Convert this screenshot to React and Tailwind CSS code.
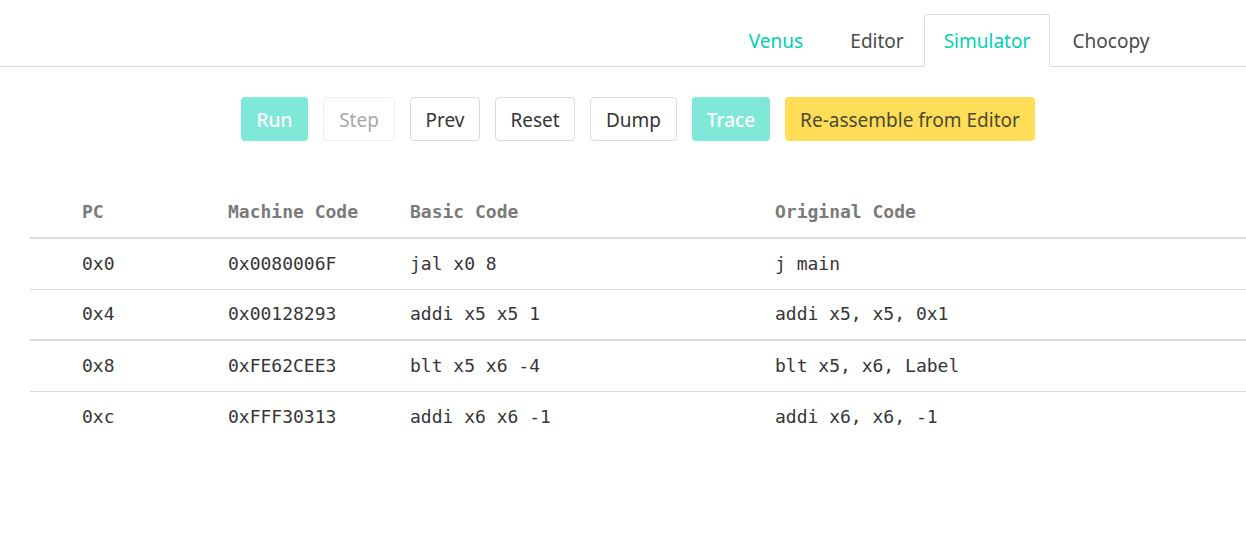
import React from 'react';

const tabs = [
  { name: 'Venus', width: 'w-[94px]', cls: 'text-[#00d1b2]', ml: 'ml-0' },
  { name: 'Editor', width: 'w-[94px]', cls: 'text-[#4a4a4a]', ml: 'ml-[7px]' },
  { name: 'Simulator', width: 'w-[126px]', cls: 'text-[#00d1b2]', active: true, ml: 'ml-0' },
  { name: 'Chocopy', width: 'w-[122px]', cls: 'text-[#4a4a4a]', ml: 'ml-0' },
];

const rows = [
  { pc: '0x0', mc: '0x0080006F', basic: 'jal x0 8', orig: 'j main', border: 'border-b border-[#dbdbdb]' },
  { pc: '0x4', mc: '0x00128293', basic: 'addi x5 x5 1', orig: 'addi x5, x5, 0x1', border: 'border-b-2 border-[#dbdbdb]' },
  { pc: '0x8', mc: '0xFE62CEE3', basic: 'blt x5 x6 -4', orig: 'blt x5, x6, Label', border: 'border-b border-[#dbdbdb]' },
  { pc: '0xc', mc: '0xFFF30313', basic: 'addi x6 x6 -1', orig: 'addi x6, x6, -1', border: '' },
];

const mono = { fontFamily: '"DejaVu Sans Mono", "Liberation Mono", monospace' };

export default function App() {
  return (
    <div className="w-[1246px] h-[548px] bg-white overflow-hidden text-[#4a4a4a]" style={{ fontFamily: '"Noto Sans", "Open Sans", sans-serif' }}>
      {/* tabs */}
      <div className="h-[67px] border-b border-[#dbdbdb] flex justify-end items-end pr-[74px]">
        {tabs.map(t => (
          <div
            key={t.name}
            className={`${t.width} ${t.ml} h-[53px] -mb-px pt-[2px] flex items-center justify-center text-[19px] rounded-t-[4px] border ${t.cls} ${t.active ? 'border-[#dbdbdb] border-b-white bg-white' : 'border-transparent'}`}
          >
            {t.name}
          </div>
        ))}
      </div>

      {/* buttons */}
      <div className="flex justify-center gap-[15px] mt-[30px] pl-[30px] text-[19px]">
        <button className="w-[67px] h-[44px] pt-[2px] rounded-[4px] bg-[#80e8d9] text-white font-medium">Run</button>
        <button className="w-[72px] h-[44px] pt-[2px] rounded-[4px] border border-[#ededed] text-[#a8a8a8]">Step</button>
        <button className="w-[70px] h-[44px] pt-[2px] rounded-[4px] border border-[#dbdbdb] text-[#363636]">Prev</button>
        <button className="w-[80px] h-[44px] pt-[2px] rounded-[4px] border border-[#dbdbdb] text-[#363636]">Reset</button>
        <button className="w-[87px] h-[44px] pt-[2px] rounded-[4px] border border-[#dbdbdb] text-[#363636]">Dump</button>
        <button className="w-[78px] h-[44px] pt-[2px] rounded-[4px] bg-[#80e8d9] text-white font-medium">Trace</button>
        <button className="w-[250px] h-[44px] pt-[2px] rounded-[4px] bg-[#ffdd57] text-[#4a4a35]">Re-assemble from Editor</button>
      </div>

      {/* table */}
      <div className="mt-[46px] ml-[30px] text-[18px]" style={mono}>
        <div className="flex items-center h-[52px] pb-[2px] border-b-2 border-[#dbdbdb] font-bold text-[#7a7a7a]">
          <div className="w-[198px] pl-[52px]">PC</div>
          <div className="w-[182px]">Machine Code</div>
          <div className="w-[365px]">Basic Code</div>
          <div className="flex-1">Original Code</div>
        </div>
        {rows.map(r => (
          <div key={r.pc} className={`flex items-center h-[51px] pb-[2px] text-[#363636] ${r.border}`}>
            <div className="w-[198px] pl-[52px]">{r.pc}</div>
            <div className="w-[182px]">{r.mc}</div>
            <div className="w-[365px]">{r.basic}</div>
            <div className="flex-1">{r.orig}</div>
          </div>
        ))}
      </div>
    </div>
  );
}
